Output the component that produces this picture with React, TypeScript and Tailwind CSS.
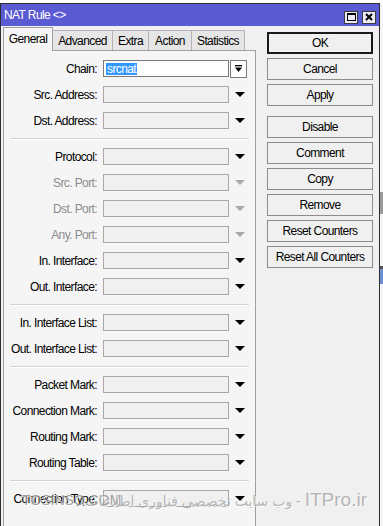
import React from 'react';

type Field = { label: string; disabled?: boolean; chain?: boolean };

const groups: Field[][] = [
  [{ label: 'Chain:', chain: true }, { label: 'Src. Address:' }, { label: 'Dst. Address:' }],
  [
    { label: 'Protocol:' },
    { label: 'Src. Port:', disabled: true },
    { label: 'Dst. Port:', disabled: true },
    { label: 'Any. Port:', disabled: true },
    { label: 'In. Interface:' },
    { label: 'Out. Interface:' }
  ],
  [{ label: 'In. Interface List:' }, { label: 'Out. Interface List:' }],
  [
    { label: 'Packet Mark:' },
    { label: 'Connection Mark:' },
    { label: 'Routing Mark:' },
    { label: 'Routing Table:' }
  ],
  [{ label: 'Connection Type:' }]
];

const tabs = [
  { name: 'General', w: 'w-[50px]' },
  { name: 'Advanced', w: 'w-[60px]' },
  { name: 'Extra', w: 'w-[36px]' },
  { name: 'Action', w: 'w-[43px]' },
  { name: 'Statistics', w: 'w-[53px]' }
];

const buttons = [
  ['OK', 'Cancel', 'Apply'],
  ['Disable', 'Comment', 'Copy', 'Remove', 'Reset Counters', 'Reset All Counters']
];

function Arrow({ disabled }: { disabled?: boolean }) {
  return (
    <svg width="10" height="5" viewBox="0 0 10 5" className="ml-[6px] shrink-0">
      <polygon points="0,0 10,0 5,5" fill={disabled ? '#a8a8a8' : '#000'} />
    </svg>
  );
}

function Row({ field }: { field: Field }) {
  return (
    <div className="flex items-center h-[17px]">
      <div className="w-[93px] flex justify-end shrink-0">
        <span
          className={`whitespace-nowrap shrink-0 ${field.disabled ? 'text-[#8c8c8c]' : 'text-black'}`}
        >
          {field.label}
        </span>
      </div>
      {field.chain ? (
        <>
          <div className="ml-[6px] w-[126px] h-[17px] bg-white border border-[#7a7a7a] flex items-center pl-[2px]">
            <span className="bg-[#3399ff] text-white leading-[12px] px-px">srcnat</span>
          </div>
          <div className="ml-px w-[17px] h-[18px] bg-white border border-[#7a7a7a] flex items-center justify-center">
            <svg width="9" height="9" viewBox="0 0 9 9">
              <rect x="1" y="1" width="7" height="1.3" fill="#000" />
              <polygon points="1,3.5 8,3.5 4.5,8" fill="#000" />
            </svg>
          </div>
        </>
      ) : (
        <>
          <div className="ml-[6px] w-[126px] h-[17px] bg-[#f0f0f0] border border-[#a8a8a8]" />
          <Arrow disabled={field.disabled} />
        </>
      )}
    </div>
  );
}

function Separator() {
  return <div className="mx-[6px] h-px bg-[#d2d2d2] shadow-[0_1px_0_#fff]" />;
}

export default function App() {
  return (
    <div className="relative w-[383px] h-[526px] overflow-hidden bg-white font-['Liberation_Sans',Arial,sans-serif] text-[12px] tracking-[-0.6px] text-black">
      <div className="flex">
        <div className="mt-[3px] w-[380px] h-[600px] border border-[#2e2e2e] bg-[#f0f0f0] flex flex-col">
          {/* title bar */}
          <div className="h-[22px] bg-[#5a5ad2] flex items-center pl-[3px] pr-[3px]">
            <span className="text-white">NAT Rule &lt;&gt;</span>
            <div className="ml-auto flex gap-[4px] mt-[4px]">
              <div className="w-[14px] h-[13px] bg-[#eceaf4] border border-[#3a3a3a] flex items-center justify-center">
                <div className="w-[9px] h-[8px] border border-black border-t-2" />
              </div>
              <div className="w-[14px] h-[13px] bg-[#eceaf4] border border-[#3a3a3a] flex items-center justify-center">
                <svg width="8" height="8" viewBox="0 0 8 8">
                  <path d="M1 1 L7 7 M7 1 L1 7" stroke="#000" strokeWidth="2" />
                </svg>
              </div>
            </div>
          </div>

          <div className="flex flex-1">
            {/* left: tabs + panel */}
            <div className="flex flex-col pl-[2px]">
              <div className="flex items-end h-[24px]">
                {tabs.map((t, i) =>
                  i === 0 ? (
                    <div
                      key={t.name}
                      className={`${t.w} h-[24px] -mb-px relative z-10 bg-[#f5f5f5] border border-b-0 border-[#a0a0a0] flex items-center justify-center pb-px`}
                    >
                      {t.name}
                    </div>
                  ) : (
                    <div
                      key={t.name}
                      className={`${t.w} h-[20px] bg-[#e6e6e6] border border-l-0 border-b-0 border-[#b4b4b4] flex items-center justify-center`}
                    >
                      {t.name}
                    </div>
                  )
                )}
              </div>
              <div className="w-[253px] flex-1 bg-[#f5f5f5] border border-[#a0a0a0] pt-[9px] flex flex-col gap-[9px]">
                {groups.map((g, gi) => (
                  <React.Fragment key={gi}>
                    {gi > 0 && <Separator />}
                    {g.map(f => (
                      <Row key={f.label} field={f} />
                    ))}
                  </React.Fragment>
                ))}
              </div>
            </div>

            {/* right: buttons */}
            <div className="pl-[11px] pt-[6px] flex flex-col gap-[10px]">
              {buttons.map((grp, gi) => (
                <div key={gi} className="flex flex-col gap-[4px]">
                  {grp.map(b => (
                    <div
                      key={b}
                      className={`w-[106px] h-[22px] flex items-center justify-center bg-[#f0f0f0] ${
                        b === 'OK' ? 'border-2 border-[#1a1a1a]' : 'border border-[#8c8c8c]'
                      }`}
                    >
                      {b}
                    </div>
                  ))}
                </div>
              ))}
            </div>
          </div>
        </div>

        {/* sliver of the window behind */}
        <div className="w-[3px] mt-[3px] flex flex-col bg-[#f4f4f4]">
          <div className="h-[189px]" />
          <div className="h-[22px] bg-[#9a9a9a]" />
          <div className="h-[52px]" />
          <div className="h-[3px] bg-[#555]" />
          <div className="h-[15px] bg-[#6d8fd6]" />
        </div>
      </div>

      {/* watermark */}
      <div className="absolute left-[22px] top-[490px] text-[14px] tracking-normal text-[#8e8e8e] opacity-80 [text-shadow:1px_1px_0_#fff]">
        TOSINSO.COM
      </div>
      <div
        dir="rtl"
        className="absolute right-[16px] top-[486px] flex items-baseline gap-[4px] tracking-normal text-[#a8a8a8] opacity-80 whitespace-nowrap font-['Liberation_Sans','DejaVu_Sans',sans-serif] [text-shadow:1px_1px_0_#fff]"
      >
        <span className="text-[19px]">ITPro.ir</span>
        <span className="text-[14px]">- وب سایت تخصصی فناوری اطلاعات</span>
      </div>
    </div>
  );
}
